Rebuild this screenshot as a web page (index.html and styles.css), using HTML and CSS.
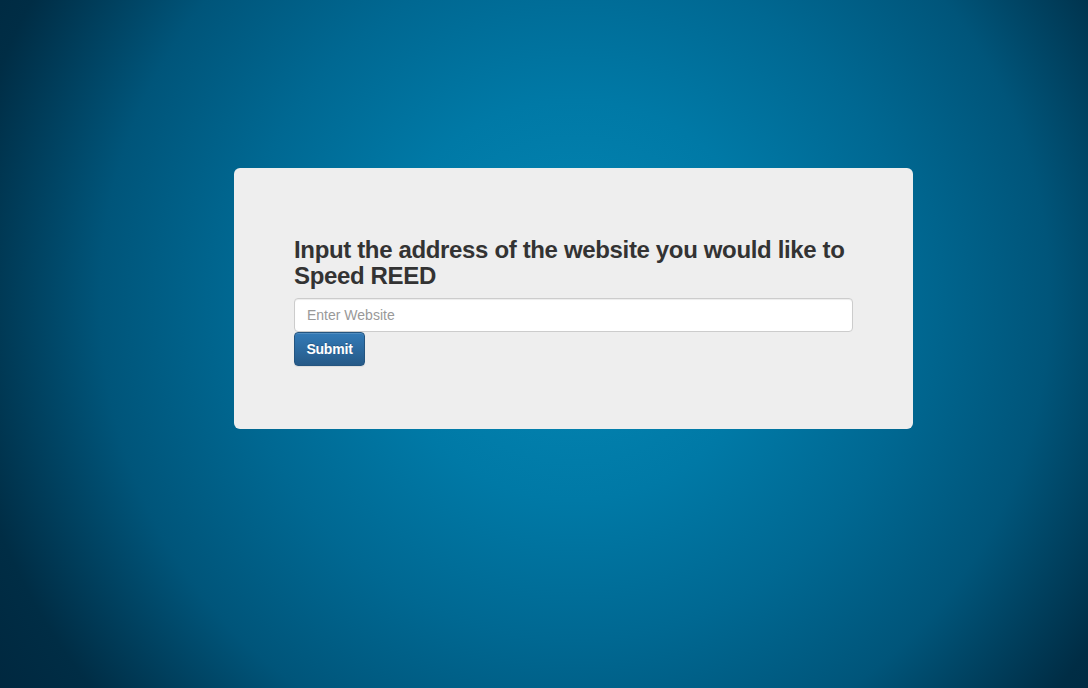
FILE: index.html
```html
<!DOCTYPE html>
<html lang="en">
<head>
<meta charset="utf-8">
<title>Speed REED</title>
<link rel="stylesheet" href="styles.css">
</head>
<body>
<div class="page">
  <div class="jumbotron">
    <h3 class="title">Input the address of the website you would like to Speed REED</h3>
    <form class="form">
      <input class="field" type="text" placeholder="Enter Website">
      <button class="btn" type="button">Submit</button>
    </form>
  </div>
</div>
</body>
</html>
```
FILE: styles.css
```css
html, body {
  margin: 0;
  height: 100%;
}
body {
  background: radial-gradient(circle at 575px 300px, #0589b6 0px, #0079a6 200px, #006892 340px, #00557a 475px, #002d45 620px, #00233a 760px);
  font-family: "Liberation Sans", Arial, Helvetica, sans-serif;
  font-size: 14px;
  color: #333;
}
.page {
  padding: 168px 0 0 234px;
}
.jumbotron {
  width: 559px;
  padding: 48px 60px 63px;
  background: #eeeeee;
  border-radius: 6px;
}
.title {
  margin: 21px 0 8px;
  font-size: 24px;
  line-height: 26.4px;
  font-weight: bold;
  letter-spacing: -0.35px;
  color: #333;
}
.form {
  display: flex;
  flex-direction: column;
  align-items: flex-start;
}
.field {
  box-sizing: border-box;
  width: 100%;
  height: 34px;
  padding: 6px 12px;
  font-family: inherit;
  font-size: 14px;
  color: #555;
  background: #fff;
  border: 1px solid #ccc;
  border-radius: 4px;
  box-shadow: inset 0 1px 1px rgba(0,0,0,.075);
  margin: 0;
}
.field::placeholder {
  color: #999;
}
.btn {
  box-sizing: border-box;
  height: 34px;
  width: 71px;
  padding: 0;
  font-family: inherit;
  font-size: 14px;
  font-weight: bold;
  letter-spacing: -0.2px;
  color: #fff;
  text-shadow: 0 -1px 0 rgba(0,0,0,.2);
  background: linear-gradient(to bottom, #337ab7 0, #265a88 100%);
  border: 1px solid #245580;
  border-radius: 4px;
  box-shadow: inset 0 1px 0 rgba(255,255,255,.15), 0 1px 1px rgba(0,0,0,.075);
  margin: 0;
}
```
